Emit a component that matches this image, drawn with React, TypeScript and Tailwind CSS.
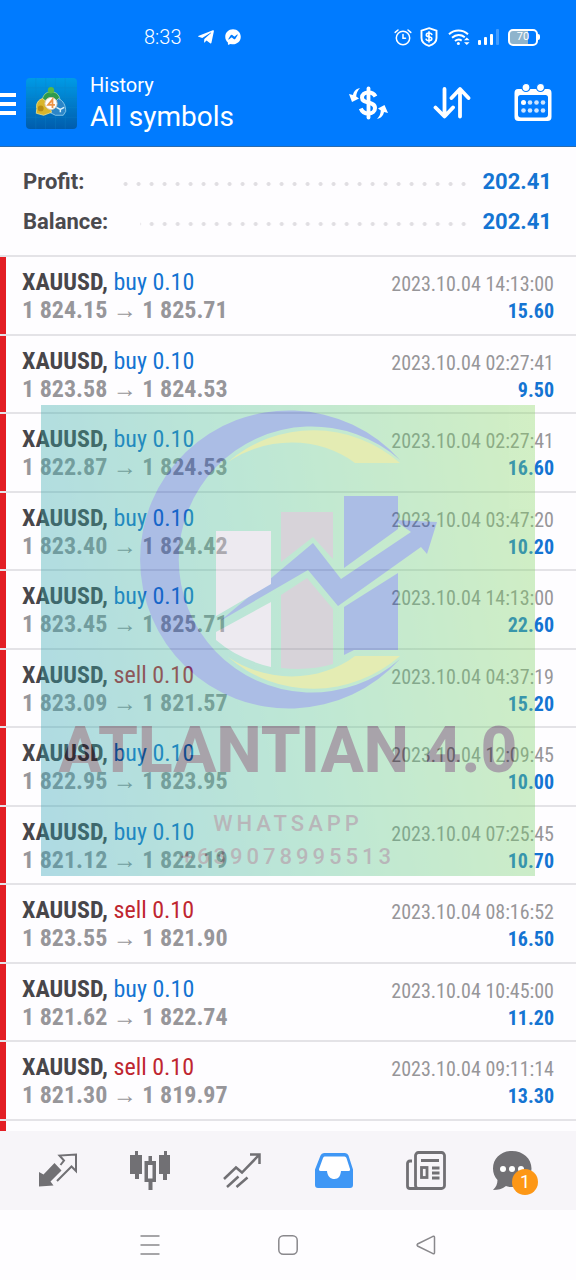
import { FaFacebookMessenger, FaTelegramPlane } from "react-icons/fa";

type Deal = {
  side: "buy" | "sell";
  open: string;
  close: string;
  time: string;
  profit: string;
};

const deals: Deal[] = [
  { side: "buy", open: "1 824.15", close: "1 825.71", time: "2023.10.04 14:13:00", profit: "15.60" },
  { side: "buy", open: "1 823.58", close: "1 824.53", time: "2023.10.04 02:27:41", profit: "9.50" },
  { side: "buy", open: "1 822.87", close: "1 824.53", time: "2023.10.04 02:27:41", profit: "16.60" },
  { side: "buy", open: "1 823.40", close: "1 824.42", time: "2023.10.04 03:47:20", profit: "10.20" },
  { side: "buy", open: "1 823.45", close: "1 825.71", time: "2023.10.04 14:13:00", profit: "22.60" },
  { side: "sell", open: "1 823.09", close: "1 821.57", time: "2023.10.04 04:37:19", profit: "15.20" },
  { side: "buy", open: "1 822.95", close: "1 823.95", time: "2023.10.04 12:09:45", profit: "10.00" },
  { side: "buy", open: "1 821.12", close: "1 822.19", time: "2023.10.04 07:25:45", profit: "10.70" },
  { side: "sell", open: "1 823.55", close: "1 821.90", time: "2023.10.04 08:16:52", profit: "16.50" },
  { side: "buy", open: "1 821.62", close: "1 822.74", time: "2023.10.04 10:45:00", profit: "11.20" },
  { side: "sell", open: "1 821.30", close: "1 819.97", time: "2023.10.04 09:11:14", profit: "13.30" },
];

function StatusBar(): React.JSX.Element {
  return (
    <div className="flex h-16 items-center justify-between pt-2.5 pr-9 pl-36">
      <div className="flex items-center">
        <span className="text-xl leading-6 font-light">8:33</span>
        <FaTelegramPlane className="ml-4 size-[18px]" />
        <FaFacebookMessenger className="ml-2.5 size-4" />
      </div>
      <div className="flex items-center">
        <svg className="size-[18px]" viewBox="0 0 18 18" fill="none" stroke="currentColor" strokeWidth="1.5" strokeLinecap="round">
          <circle cx="9" cy="10" r="6.7" />
          <path d="M9 6.5V10.3H11.5M1.2 4.4 4 2M16.8 4.4 14 2" />
        </svg>
        <svg className="ml-2 h-5 w-[18px]" viewBox="0 0 18 20" fill="none" stroke="currentColor" strokeLinecap="round">
          <path strokeWidth="1.9" d="M9 1.2 16.5 3.6V11C16.5 15 13.5 17.5 9 18.9 4.5 17.5 1.5 15 1.5 11V3.6Z" />
          <path strokeWidth="1.6" d="M11.8 7.4C11.3 6.3 10.3 6 9 6 7.4 6 6.3 6.7 6.3 7.9 6.3 10.6 11.8 8.9 11.8 11.8 11.8 13 10.7 13.7 9 13.7 7.5 13.7 6.5 13.2 6.1 12.2M9 4.7V15" />
        </svg>
        <svg className="ml-2.5 h-[18px] w-[22px]" viewBox="0 0 22 18" fill="none" stroke="currentColor">
          <path strokeWidth="2" d="M1 6.2C6.5 1.2 14.5 1.2 20 6.2M4 9.7C8 6.3 13 6.3 16.8 9.3M7 13C9.3 11.2 11.7 11.2 13.7 12.6" />
          <circle cx="10.4" cy="15.6" r="1.5" fill="currentColor" stroke="none" />
          <path fill="currentColor" stroke="none" d="M16 12.3 18.8 9.5 21.6 12.3ZM16 14.3 18.8 17.1 21.6 14.3Z" />
        </svg>
        <svg className="ml-2 h-4 w-[22px]" viewBox="0 0 22 16" fill="currentColor">
          <rect x="0" y="11" width="3" height="5" rx="1" />
          <rect x="6" y="8" width="3" height="8" rx="1" />
          <rect x="12" y="5" width="3" height="11" rx="1" />
          <rect x="18" y="0" width="3" height="16" rx="1" opacity="0.25" />
        </svg>
        <div className="ml-2 flex items-center">
          <span className="flex h-[17px] w-[30px] items-center justify-center rounded-[5px] border-2 border-white bg-linear-to-r from-[#8fb4cc] from-70% to-transparent to-70% text-[11px] leading-3">
            70
          </span>
          <span className="h-1.5 w-0.5 rounded-r-sm bg-white" />
        </div>
      </div>
    </div>
  );
}

function AppLogo(): React.JSX.Element {
  return (
    <svg className="ml-2.5 size-[51px]" viewBox="0 0 52 52">
      <defs>
        <linearGradient id="logo-bg" x1="0" y1="0" x2="0" y2="1">
          <stop offset="0" stopColor="#009be6" />
          <stop offset="1" stopColor="#005cac" />
        </linearGradient>
      </defs>
      <rect width="52" height="52" rx="4" fill="url(#logo-bg)" />
      <path stroke="#0f86c8" strokeWidth="0.5" opacity="0.6" d="M0 10H52M0 20H52M0 30H52M0 40H52M10 0V52M20 0V52M30 0V52M40 0V52" />
      <path fill="#2d9a4e" stroke="#a8dc90" strokeWidth="0.8" d="M25.5 14C32 14 35 19 34.5 24L30 28H21L16.5 23C17 18 20 14 25.5 14Z" />
      <path fill="#2b86c8" stroke="#9fd6f0" strokeWidth="0.8" d="M33 21C38 23 40.5 28 40.5 34L38 38H30L24 35 26 28Z" />
      <path fill="#d9b52c" stroke="#f2e48a" strokeWidth="0.8" d="M17 21C12 22 10 27 11 31L10.5 36 18 38 26 35 24 27Z" />
      <circle cx="25.5" cy="12.5" r="3.2" fill="#57b846" />
      <circle cx="15" cy="31" r="3" fill="#b78c14" />
      <path stroke="#d9f1fb" strokeWidth="1.5" fill="none" d="M31 30 35 32 39 30M35 32V35" />
      <circle cx="25.5" cy="26" r="6.2" fill="#fff" stroke="#d8c9b0" />
      <path fill="none" stroke="#ee9345" strokeWidth="1.8" d="M27 30.5V22L22.5 27.5H29.5" />
    </svg>
  );
}

function Header(): React.JSX.Element {
  return (
    <header className="border-b border-[#2b6cae] bg-[#007bff] text-white">
      <StatusBar />
      <div className="flex h-[82px] items-center pr-6 pb-1">
        <button type="button" aria-label="Menu" className="flex h-6 w-4 flex-col justify-center gap-[5px] pt-0.5">
          <span className="h-1 bg-white" />
          <span className="h-1 bg-white" />
          <span className="h-1 bg-white" />
        </button>
        <div className="flex flex-1 items-center">
          <AppLogo />
          <div className="ml-[13px]">
            <p className="text-xl leading-7">History</p>
            <h1 className="text-[28px] leading-9">All symbols</h1>
          </div>
        </div>
        <div className="flex items-center gap-[43px]">
          <button type="button" aria-label="Currency">
            <svg className="size-10" viewBox="0 0 40 40" fill="none" stroke="currentColor">
              <path strokeWidth="3.8" strokeLinecap="round" d="M20.5 5.5V34.5" />
              <path strokeWidth="4" d="M27.5 13.5C26 10.5 23.5 9.5 20.5 9.5 16.5 9.5 14 11.5 14 14.7 14 21.5 27 17.5 27 25 27 28.5 24.3 30.5 20.5 30.5 16.5 30.5 14 28.8 12.8 25.5" />
              <path fill="currentColor" stroke="none" d="M12 5C7.5 6 5.5 9 5 12L1 11 4 19 11 15.5 8.2 13.5C8.5 10 9.5 7.5 12 5ZM29 36C33.5 35 35.5 32 36 29L40 30 36.5 22 30 25.5 32.8 27.5C32.5 31 31.5 33.5 29 36Z" />
            </svg>
          </button>
          <button type="button" aria-label="Sort">
            <svg className="size-10" viewBox="0 0 40 40" fill="none" stroke="currentColor" strokeWidth="3.8" strokeLinecap="round" strokeLinejoin="round">
              <path d="M13.5 6V33M4.5 24.5 13.5 33.5 22 24.5M29 33.5V7M20.5 15 29 6 37.5 15" />
            </svg>
          </button>
          <button type="button" aria-label="Calendar">
            <svg className="h-10 w-[38px]" viewBox="0 0 38 40">
              <path fill="currentColor" fillRule="evenodd" d="M4 6H34Q37.5 6 37.5 10V34Q37.5 38 33.5 38H4.5Q.5 38 .5 34V10Q.5 6 4 6ZM6.5 12Q4 12 4 14.5V31.5Q4 34.5 7 34.5H31Q34 34.5 34 31.5V14.5Q34 12 31.5 12Z" />
              <g fill="currentColor" stroke="#007bff" strokeWidth="1.2">
                <circle cx="12" cy="4.5" r="4" />
                <circle cx="26.5" cy="4.5" r="4" />
              </g>
              <g fill="currentColor">
                <circle cx="9.5" cy="19.5" r="2.5" />
                <circle cx="16" cy="19.5" r="2.3" opacity="0.8" />
                <circle cx="22.5" cy="19.5" r="2.3" opacity="0.8" />
                <circle cx="29" cy="19.5" r="2.3" opacity="0.8" />
                <circle cx="9.5" cy="27.5" r="2.3" opacity="0.8" />
                <circle cx="16" cy="27.5" r="2.3" opacity="0.8" />
                <circle cx="22.5" cy="27.5" r="2.3" opacity="0.8" />
                <circle cx="29" cy="27.5" r="2.3" opacity="0.8" />
              </g>
            </svg>
          </button>
        </div>
      </div>
    </header>
  );
}

type SummaryRowProps = {
  label: string;
  value: string;
};

function SummaryRow({ label, value }: SummaryRowProps): React.JSX.Element {
  return (
    <div className="flex h-10 items-center text-[22px] font-bold">
      <dt className="text-[#4b4a4e]">{label}</dt>
      <dd className="flex flex-1 items-center text-[#1474d2]">
        <span className="mt-1.5 mr-3 ml-8 h-1.5 flex-1 bg-[radial-gradient(circle,#e0dee2_1.5px,transparent_2.5px)] bg-[length:13px_6px] bg-right bg-repeat-x" />
        {value}
      </dd>
    </div>
  );
}

function DealRow({ deal }: { deal: Deal }): React.JSX.Element {
  return (
    <li className="flex shrink-0 border-b-2 border-[#e4e3e7] odd:h-[79px] even:h-[78px]">
      <span className="w-1.5 bg-[#e31e24]" />
      <div className="flex flex-1 justify-between pt-[11px] pr-[22px] pl-4 font-['Roboto_Condensed','Roboto',sans-serif]">
        <div className="text-2xl leading-7">
          <p>
            <span className="font-bold text-[#48464a]">XAUUSD,</span>{" "}
            <span className={deal.side === "buy" ? "text-[#1474d2]" : "text-[#bf2630]"}>
              {deal.side} 0.10
            </span>
          </p>
          <p className="font-bold text-[#97969a]">
            {deal.open}{" "}
            <span className="font-['Liberation_Sans',sans-serif] leading-6 font-normal">→</span>{" "}
            {deal.close}
          </p>
        </div>
        <div className="pt-[3px] text-right text-xl leading-[27px]">
          <p className="text-[#979699]">{deal.time}</p>
          <p className="font-bold text-[#1474d2]">{deal.profit}</p>
        </div>
      </div>
    </li>
  );
}

function Watermark(): React.JSX.Element {
  return (
    <div className="pointer-events-none absolute inset-x-[41px] top-[258px] h-[471px] bg-linear-[80deg,#249eb4,#4ec28b,#85d65c] text-center whitespace-nowrap opacity-36">
      <svg className="w-full" viewBox="41 405 494 310">
        <g fill="#1c4eba">
          <path d="M400 460A149 149 0 1 0 400 659 133 133 0 1 1 400 460Z" />
          <path d="M344 496H398V529L344 568ZM344 607 398 573V650H354L344 655Z" />
          <path d="M220 621 313 543 341 579 411 532 394 520 437 522 427 554 421 547 338 606 308 570Z" />
        </g>
        <g fill="#b7d02f">
          <path d="M400 463A131 131 0 0 0 228 462C270 434 322 438 355 463Z" />
          <path d="M400 656A131 131 0 0 1 228 657C270 685 322 681 355 656Z" />
        </g>
        <path fill="#d0cbd6" d="M216 531H271V584L216 616ZM216 632 271 602V667Q238 659 216 640Z" />
        <path fill="#938b99" d="M281 512H333V559L313 537 281 562ZM281 595 307 578 333 609V664Q310 671 281 668Z" />
      </svg>
      <p className="text-[64px] leading-[72px] font-extrabold text-[#130616]">ATLANTIAN 4.0</p>
      <p className="mt-5 text-[22px] leading-[33px] font-medium tracking-[4px] text-[#3f3a40]">WHATSAPP</p>
      <p className="text-[22px] leading-[33px] font-medium tracking-[4px] text-[#3f3a40]">+639078995513</p>
    </div>
  );
}

function TabBar(): React.JSX.Element {
  return (
    <nav className="z-10 grid h-[79px] shrink-0 grid-cols-6 items-center justify-items-center bg-[#f7f5f9] px-3 text-[#717074]">
      <button type="button" aria-label="Quotes">
        <svg className="size-10" viewBox="0 0 40 40">
          <path fill="currentColor" d="M1 21 5.5 23.5 16.5 12 23.5 19.5 12.5 30.5 15.5 34.5 1 35.5Z" />
          <path fill="none" stroke="currentColor" strokeWidth="2" d="M22.5 14 26 9.5 21.5 4.5 38 3.5V20L33.5 15.5 19 30" />
        </svg>
      </button>
      <button type="button" aria-label="Charts">
        <svg className="size-10" viewBox="0 0 40 40" fill="currentColor">
          <path d="M5 0H8V4H12V23H9V28H5V23H0V4H5ZM34 0H37V4H40V23H37V29H33V23H29V4H34Z" />
          <path fillRule="evenodd" d="M18.5 5H22V10H26V31H22.5V39H18.5V31H14.5V10H18.5ZM18 14V27.5H22.5V14Z" />
        </svg>
      </button>
      <button type="button" aria-label="Trade">
        <svg className="size-10" viewBox="0 0 40 40" fill="none" stroke="currentColor" strokeWidth="2.5">
          <path d="M2 28 14 16.5 20 21.5 37 4M28 3.5H37.5V13M5 36 16.5 25.5M14.5 36 25.5 26.5" />
        </svg>
      </button>
      <button type="button" aria-label="History" className="text-[#3f97f5]">
        <svg className="size-10" viewBox="0 0 40 40">
          <path fill="#fff" d="M10 4H31L37 21 27 22Q26 29 20 29T13 21H4Z" />
          <path fill="currentColor" fillRule="evenodd" d="M10 2H31Q33.5 2 34.5 4.5L39 18.5V34Q39 37 36 37H4Q1 37 1 34V18.5L6.5 4.5Q7.5 2 10 2ZM10.5 5.5Q9.5 5.5 9 7L5 18Q4.5 20 6.5 20H13C13.5 25.5 16.5 28 20.5 28 24.5 28 26.5 25 27 20H34Q36.5 20 36 18L32.5 7Q32 5.5 30.5 5.5Z" />
        </svg>
      </button>
      <button type="button" aria-label="News">
        <svg className="size-10" viewBox="0 0 40 40" fill="none" stroke="currentColor" strokeWidth="2.8">
          <rect x="9.5" y="1.5" width="29" height="36" rx="3" />
          <path d="M6 10H4Q1.5 10 1.5 12.5V35Q1.5 37.5 4 37.5H12M15 9.5H33M26 17H33.5M26 22H33.5M26 27H33.5" />
          <rect x="15.5" y="16.5" width="5.5" height="10" />
        </svg>
      </button>
      <button type="button" aria-label="Messages" className="relative mr-3">
        <svg className="size-10" viewBox="0 0 40 40">
          <path fill="currentColor" d="M20 0C31 0 39.5 7.5 39.5 17.5 39.5 27.5 31 36 20 36 17 36 15 35.5 14 35 10 38 6 39 1 39 4 36 5.5 33 5.5 29 2.5 26 1 22 1 17.5 1 7.5 9 0 20 0Z" />
          <g fill="#fff">
            <circle cx="11" cy="18" r="3" />
            <circle cx="20" cy="18" r="3" />
            <circle cx="29" cy="18" r="3" />
          </g>
        </svg>
        <span className="absolute top-[18px] left-5 flex size-[26px] items-center justify-center rounded-full bg-[#fd9716] text-lg leading-5 text-white">
          1
        </span>
      </button>
    </nav>
  );
}

function SystemNav(): React.JSX.Element {
  return (
    <nav className="z-10 flex h-[70px] shrink-0 items-center justify-center gap-[116px] bg-[#fefdff] text-[#89888c]">
      <button type="button" aria-label="Recent apps">
        <svg className="size-[22px]" viewBox="0 0 22 22" stroke="currentColor" strokeWidth="1.5">
          <path d="M1.5 2H20.5M1.5 11H20.5M1.5 20H20.5" />
        </svg>
      </button>
      <button type="button" aria-label="Home">
        <svg className="size-[22px]" viewBox="0 0 22 22" fill="none" stroke="currentColor" strokeWidth="1.5">
          <rect x="1.8" y="1.8" width="18.4" height="18.4" rx="4.5" />
        </svg>
      </button>
      <button type="button" aria-label="Back">
        <svg className="size-[22px]" viewBox="0 0 22 22" fill="none" stroke="currentColor" strokeWidth="1.5" strokeLinejoin="round">
          <path d="M18 2.3 2.5 10Q1.5 11 2.5 12L18 19.7Q19.5 20 19.5 18.5V3.5Q19.5 2 18 2.3Z" />
        </svg>
      </button>
    </nav>
  );
}

export default function App(): React.JSX.Element {
  return (
    <div className="flex h-screen flex-col overflow-hidden bg-[#fefdff] font-['Roboto',sans-serif]">
      <Header />
      <main className="relative min-h-0 flex-1 overflow-hidden">
        <div className="flex h-full flex-col">
          <dl className="shrink-0 border-b-2 border-[#e4e3e7] py-3.5 pr-6 pl-[23px]">
            <SummaryRow label="Profit:" value="202.41" />
            <SummaryRow label="Balance:" value="202.41" />
          </dl>
          <ul className="flex min-h-0 flex-1 flex-col overflow-hidden">
            {deals.map((deal) => (
              <DealRow key={deal.open + deal.time} deal={deal} />
            ))}
            {/* Top edge of the next deal in the list */}
            <li className="flex flex-1">
              <span className="w-1.5 bg-[#e31e24]" />
            </li>
          </ul>
        </div>
        <Watermark />
      </main>
      <TabBar />
      <SystemNav />
    </div>
  );
}
